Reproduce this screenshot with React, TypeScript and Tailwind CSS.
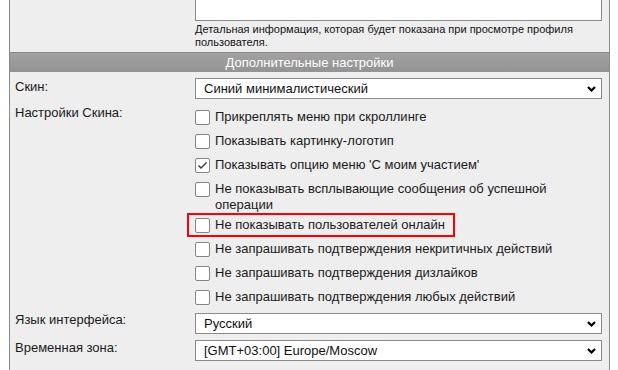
import React from "react";

type Opt = { text: string; checked?: boolean; h: string; outlined?: boolean };

const options: Opt[] = [
	{ text: "Прикреплять меню при скроллинге", h: "h-[24px]" },
	{ text: "Показывать картинку-логотип", h: "h-[24px]" },
	{ text: "Показывать опцию меню 'С моим участием'", checked: true, h: "h-[24px]" },
	{ text: "Не показывать всплывающие сообщения об успешной операции", h: "h-[36px]" },
	{ text: "Не показывать пользователей онлайн", h: "h-[24px]", outlined: true },
	{ text: "Не запрашивать подтверждения некритичных действий", h: "h-[24px]" },
	{ text: "Не запрашивать подтверждения дизлайков", h: "h-[24px]" },
	{ text: "Не запрашивать подтверждения любых действий", h: "h-[22px]" },
];

const Chevron = () => (
	<svg width="9" height="6" viewBox="0 0 9 6" className="shrink-0">
		<polyline points="1,1 4.5,4.5 8,1" fill="none" stroke="#000" strokeWidth="2.2" />
	</svg>
);

const Select = ({ value }: { value: string }) => (
	<div className="flex h-[21px] items-center justify-between border border-[#8a8a8a] bg-white pl-[8px] pr-[5px] text-[13px] text-[#111]">
		<span>{value}</span>
		<Chevron />
	</div>
);

const Checkbox = ({ checked }: { checked?: boolean }) => (
	<span className="flex h-[15px] w-[15px] shrink-0 items-center justify-center rounded-[2px] border border-[#858585] bg-white">
		{checked && (
			<svg width="11" height="9" viewBox="0 0 11 9">
				<polyline points="1.5,4.5 4,7 9.5,1.5" fill="none" stroke="#333" strokeWidth="1.4" />
			</svg>
		)}
	</span>
);

export default function App() {
	return (
		<div className="h-[370px] w-[618px] overflow-hidden bg-white font-['Liberation_Sans',Arial,sans-serif] text-[#1a1a1a]">
			<div className="ml-[9px] h-full w-[601px] border-x border-[#8a8a8a] bg-[#eeeeee]">
				{/* profile info tail */}
				<div className="flex">
					<div className="w-[185px]" />
					<div className="w-[407px]">
						<div className="mt-[-20px] h-[41px] border border-[#8a8a8a] bg-white" />
						<p className="mt-[2px] text-[11px] leading-[13px] text-[#111]">
							Детальная информация, которая будет показана при просмотре профиля пользователя.
						</p>
					</div>
				</div>

				<div className="mt-[3px] flex h-[20px] items-center justify-center border-t border-[#8a8a8a] bg-gradient-to-b from-[#a2a2a2] to-[#939393] text-[13px] text-white">
					Дополнительные настройки
				</div>

				<div className="flex pt-[6px]">
					<div className="w-[185px] pl-[5px] pt-[1px] text-[13px] leading-[15px]">Скин:</div>
					<div className="w-[407px]">
						<Select value="Синий минималистический" />
					</div>
				</div>

				<div className="flex pt-[6px]">
					<div className="w-[185px] pl-[5px] text-[13px] leading-[15px]">Настройки Скина:</div>
					<div className="w-[407px] pt-[5px]">
						{options.map((o) => (
							<div key={o.text} className={`${o.h} relative flex items-start gap-[5px] text-[13px] leading-[16px]`}>
								{o.outlined && (
									<span className="pointer-events-none absolute left-[-8px] top-[-5px] h-[24px] w-[268px] border-2 border-[#ff0000]" />
								)}
								<Checkbox checked={o.checked} />
								<span className="mt-[-1px] max-w-[390px]">{o.text}</span>
							</div>
						))}
					</div>
				</div>

				<div className="flex">
					<div className="w-[185px] pl-[5px] text-[13px] leading-[15px]">Язык интерфейса:</div>
					<div className="w-[407px] pt-[1px]">
						<Select value="Русский" />
					</div>
				</div>

				<div className="flex pt-[6px]">
					<div className="w-[185px] pl-[5px] text-[13px] leading-[15px]">Временная зона:</div>
					<div className="w-[407px]">
						<Select value="[GMT+03:00] Europe/Moscow" />
					</div>
				</div>
			</div>
		</div>
	);
}
